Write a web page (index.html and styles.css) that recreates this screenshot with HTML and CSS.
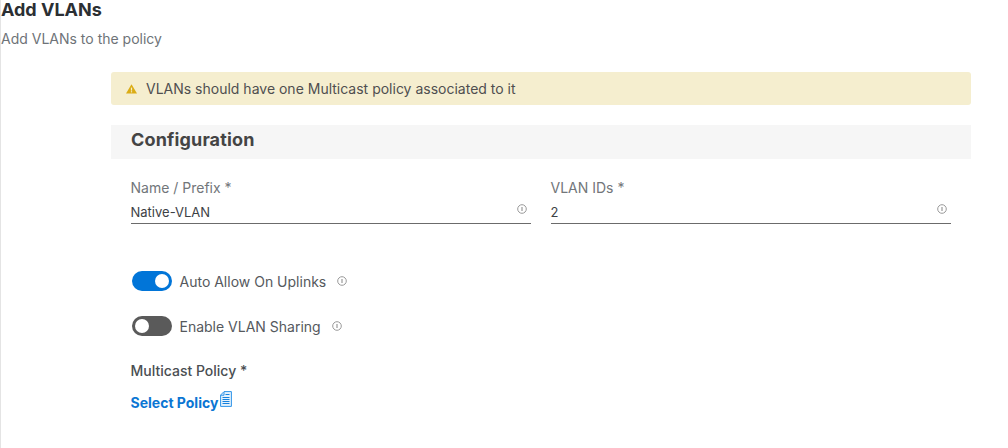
FILE: index.html
```html
<!DOCTYPE html>
<html lang="en">
<head>
<meta charset="utf-8">
<title>Add VLANs</title>
<link rel="stylesheet" href="styles.css">
</head>
<body>
<div class="page">
  <h1 class="title">Add VLANs</h1>
  <p class="subtitle">Add VLANs to the policy</p>
  <main class="content">
    <div class="alert">
      <svg class="alert-icon" width="11" height="10" viewBox="0 0 11 10"><path d="M5.5 0.2 11 9.6H0Z" fill="#dbac15"/><rect x="4.9" y="3.6" width="1.2" height="3" fill="#f5eecf"/><rect x="4.9" y="7.2" width="1.2" height="1.2" fill="#f5eecf"/></svg>
      <span>VLANs should have one Multicast policy associated to it</span>
    </div>
    <h2 class="section">Configuration</h2>
    <div class="fields">
      <div class="field">
        <label class="label">Name / Prefix *</label>
        <div class="input"><span>Native-VLAN</span>
          <svg class="info" width="10" height="10" viewBox="0 0 10 10"><circle cx="5" cy="5" r="4.3" fill="none" stroke="#9a9a9a"/><rect x="4.4" y="3" width="1.2" height="4" fill="#9a9a9a"/></svg>
        </div>
      </div>
      <div class="field">
        <label class="label">VLAN IDs *</label>
        <div class="input"><span>2</span>
          <svg class="info" width="10" height="10" viewBox="0 0 10 10"><circle cx="5" cy="5" r="4.3" fill="none" stroke="#9a9a9a"/><rect x="4.4" y="3" width="1.2" height="4" fill="#9a9a9a"/></svg>
        </div>
      </div>
    </div>
    <div class="toggle-row first">
      <span class="toggle on"><span class="knob"></span></span>
      <span class="toggle-label">Auto Allow On Uplinks</span>
      <svg class="info" width="10" height="10" viewBox="0 0 10 10"><circle cx="5" cy="5" r="4.3" fill="none" stroke="#9a9a9a"/><rect x="4.4" y="3" width="1.2" height="4" fill="#9a9a9a"/></svg>
    </div>
    <div class="toggle-row second">
      <span class="toggle off"><span class="knob"></span></span>
      <span class="toggle-label">Enable VLAN Sharing</span>
      <svg class="info" width="10" height="10" viewBox="0 0 10 10"><circle cx="5" cy="5" r="4.3" fill="none" stroke="#9a9a9a"/><rect x="4.4" y="3" width="1.2" height="4" fill="#9a9a9a"/></svg>
    </div>
    <div class="policy-label">Multicast Policy *</div>
    <a class="select-policy" href="#">Select Policy<svg class="doc" width="12" height="16" viewBox="0 0 12 16"><path d="M4 0.6H11.4V15.4H0.6V4Z" fill="#e6f2fc" stroke="#2e93e8"/><path d="M4 1V4.2H1" fill="none" stroke="#2e93e8"/><path d="M5.5 3.5H9.5M2.5 6.5H9.5M2.5 8.5H9.5M2.5 10.5H9.5M2.5 12.5H9.5" stroke="#1581de"/></svg></a>
  </main>
</div>
</body>
</html>
```
FILE: styles.css
```css
* { box-sizing: border-box; }
html, body { margin: 0; padding: 0; background: #fff; }
body { font-family: Inter, "Liberation Sans", sans-serif; height: 448px; overflow: hidden; }
.page { border-left: 1px solid #e4e4e4; height: 448px; }
.title { margin: 0; font-size: 18px; line-height: 20px; font-weight: 700; color: #2b2f33; }
.subtitle { margin: 9px 0 0; font-size: 14px; line-height: 20px; font-weight: 400; color: #6e7378; }
.content { margin: 23px 0 0 110px; width: 860px; }
.alert { height: 33px; background: #f5eecf; border-radius: 3px; display: flex; align-items: center; padding-left: 15px; gap: 9px; font-size: 14px; color: #4f4f4f; }
.section { margin: 20px 0 0; height: 34px; padding-left: 20px; background: #f6f6f6; font-size: 18px; letter-spacing: 0.15px; line-height: 29px; font-weight: 700; color: #444; }
.fields { display: grid; grid-template-columns: 400px 400px; column-gap: 20px; padding: 21px 0 0 20px; }
.label { display: block; font-size: 14px; line-height: 16px; color: #72767a; margin-left: -0.5px; }
.input { margin-top: 6px; height: 22px; border-bottom: 1px solid #6b6b6b; display: flex; align-items: flex-start; justify-content: space-between; font-size: 13px; line-height: 20px; color: #3d4145; padding-right: 4px; }
.input span { margin-left: -0.5px; }
.input .info { margin-top: 2px; }
.toggle-row { display: flex; align-items: center; padding-left: 21px; font-size: 14px; color: #55595d; height: 20px; }
.first { margin-top: 47px; }
.second { margin-top: 25px; }
.toggle { width: 40px; height: 20px; border-radius: 10px; position: relative; flex: none; }
.toggle.on { background: #0175d8; }
.toggle.off { background: #5a5a5a; }
.knob { position: absolute; top: 3px; width: 14px; height: 14px; border-radius: 50%; background: #fff; }
.on .knob { right: 3px; }
.off .knob { left: 3px; }
.toggle-label { margin-left: 7.5px; }
.toggle-row .info { margin-left: 11px; }
.policy-label { margin: 26px 0 0 19.5px; font-size: 14px; line-height: 18px; font-weight: 500; color: #4a4e52; }
.select-policy { margin: 14px 0 0 19.5px; display: inline-flex; align-items: flex-start; font-size: 14px; line-height: 18px; font-weight: 700; color: #0b76d3; text-decoration: none; }
.doc { margin: -3px 0 0 2px; }
```
